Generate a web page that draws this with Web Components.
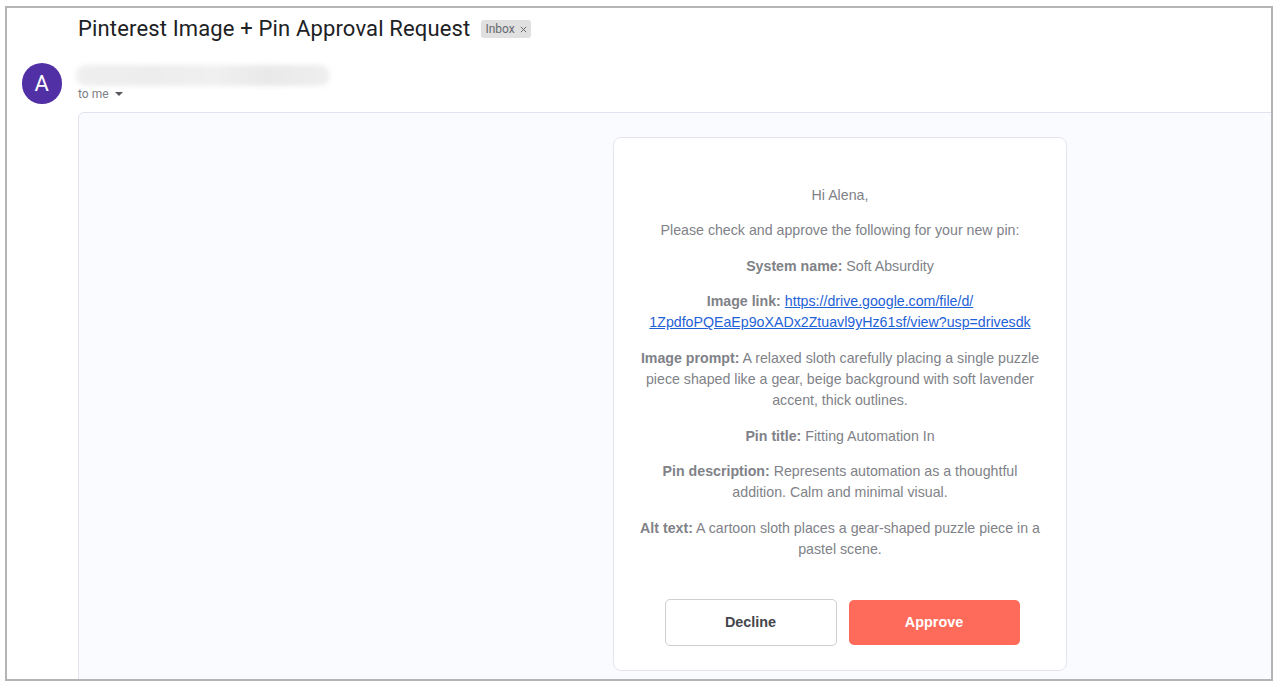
<!DOCTYPE html>
<html>
<head>
<meta charset="utf-8">
<title>Pinterest Image + Pin Approval Request</title>
<style>
  html, body { margin: 0; padding: 0; background: #fff; height: 100%; overflow: hidden; }
  approval-card a { color: #1f62d6; }
</style>
</head>
<body>
<mail-frame>
  <mail-header subject="Pinterest Image + Pin Approval Request" label="Inbox"></mail-header>
  <mail-sender initial="A"></mail-sender>
  <mail-body>
    <approval-card>
      <p>Hi Alena,</p>
      <p>Please check and approve the following for your new pin:</p>
      <p><b>System name:</b> Soft Absurdity</p>
      <p><b>Image link:</b> <a href="#">https://drive.google.com/file/d/<br>1ZpdfoPQEaEp9oXADx2Ztuavl9yHz61sf/view?usp=drivesdk</a></p>
      <p style="margin-bottom: 14.78px"><b>Image prompt:</b> A relaxed sloth carefully placing a single puzzle piece shaped like a gear, beige background with soft lavender accent, thick outlines.</p>
      <p style="margin-bottom: 14.28px"><b>Pin title:</b> Fitting Automation In</p>
      <p><b>Pin description:</b> Represents automation as a thoughtful addition. Calm and minimal visual.</p>
      <p><b>Alt text:</b> A cartoon sloth places a gear-shaped puzzle piece in a pastel scene.</p>
      <action-button slot="actions" kind="decline">Decline</action-button>
      <action-button slot="actions" kind="approve">Approve</action-button>
    </approval-card>
  </mail-body>
</mail-frame>
<script>
class MailFrame extends HTMLElement {
  constructor() {
    super();
    this.attachShadow({ mode: 'open' });
    this.shadowRoot.innerHTML = `
      <style>
        :host {
          display: flex;
          flex-direction: column;
          box-sizing: border-box;
          height: 675px;
          margin: 6px 3px 0 5px;
          border: 2px solid #b4b4b4;
          overflow: hidden;
          background: #fff;
          font-family: Roboto, "Liberation Sans", sans-serif;
        }
      </style>
      <slot></slot>
    `;
  }
}

class MailHeader extends HTMLElement {
  constructor() {
    super();
    this.attachShadow({ mode: 'open' });
    this.shadowRoot.innerHTML = `
      <style>
        :host {
          display: flex;
          align-items: center;
          height: 40px;
          padding-left: 71px;
          flex: none;
        }
        h1 {
          margin: 0;
          font-size: 22px;
          font-weight: 400;
          letter-spacing: 0.15px;
          color: #202124;
          white-space: nowrap;
        }
        .chip {
          display: flex;
          align-items: center;
          gap: 5px;
          margin: 2px 0 0 11px;
          height: 18px;
          padding: 0 4px;
          border-radius: 3px;
          background: #e0e0e0;
          color: #666a6e;
          font-size: 12px;
        }
        svg { width: 7px; height: 7px; }
      </style>
      <h1></h1>
      <span class="chip"><span class="label"></span>
        <svg viewBox="0 0 8 8"><path d="M1 1l6 6M7 1L1 7" stroke="#5f6368" stroke-width="1.1" fill="none"/></svg>
      </span>
    `;
  }
  connectedCallback() {
    this.shadowRoot.querySelector('h1').textContent = this.getAttribute('subject');
    this.shadowRoot.querySelector('.label').textContent = this.getAttribute('label');
  }
}

class MailSender extends HTMLElement {
  constructor() {
    super();
    this.attachShadow({ mode: 'open' });
    this.shadowRoot.innerHTML = `
      <style>
        :host {
          display: flex;
          flex: none;
          height: 64px;
          padding: 15px 0 0 14.5px;
          box-sizing: border-box;
        }
        .avatar {
          width: 40.5px;
          height: 40.5px;
          border-radius: 50%;
          background: #5130a5;
          color: #fff;
          display: flex;
          align-items: center;
          justify-content: center;
          font-size: 22px;
          flex: none;
        }
        .who { margin: 2px 0 0 16px; position: relative; }
        .smudge {
          width: 254px;
          height: 21px;
          margin-left: -2px;
          border-radius: 11px;
          background: linear-gradient(90deg, #efefef, #ededed 30%, #f0f0f0 55%, #e9e9e9 75%, #efefef);
          filter: blur(2.5px);
        }
        .to {
          display: flex;
          align-items: center;
          gap: 6px;
          margin-top: 1px;
          font-size: 12px;
          color: #7d8084;
        }
        .to i {
          width: 0;
          height: 0;
          border: 4px solid transparent;
          border-top-color: #55585c;
          border-bottom-width: 0;
        }
      </style>
      <div class="avatar"></div>
      <div class="who">
        <div class="smudge"></div>
        <div class="to">to me <i></i></div>
      </div>
    `;
  }
  connectedCallback() {
    this.shadowRoot.querySelector('.avatar').textContent = this.getAttribute('initial');
  }
}

class MailBody extends HTMLElement {
  constructor() {
    super();
    this.attachShadow({ mode: 'open' });
    this.shadowRoot.innerHTML = `
      <style>
        :host {
          display: block;
          flex: none;
          margin-left: 71px;
          width: 1400px;
          height: 700px;
          box-sizing: border-box;
          padding: 24px 0 0 534px;
          background: #fafbfe;
          border: 1px solid #e1e4ee;
          border-radius: 6px 0 0 0;
        }
      </style>
      <slot></slot>
    `;
  }
}

class ApprovalCard extends HTMLElement {
  constructor() {
    super();
    this.attachShadow({ mode: 'open' });
    this.shadowRoot.innerHTML = `
      <style>
        :host {
          display: block;
          box-sizing: border-box;
          width: 454px;
          height: 534px;
          padding: 46.9px 22px 0;
          background: #fff;
          border: 1px solid #e2e5ec;
          border-radius: 8px;
          text-align: center;
          font: 14.2px/21px "Liberation Sans", Arial, sans-serif;
          color: #808288;
        }
        ::slotted(p) { margin: 0 0 14.53px; }
        .actions {
          display: flex;
          justify-content: center;
          align-items: center;
          gap: 12px;
          margin-top: 39.34px;
          padding-left: 4px;
        }
      </style>
      <slot></slot>
      <div class="actions"><slot name="actions"></slot></div>
    `;
  }
}

class ActionButton extends HTMLElement {
  constructor() {
    super();
    this.attachShadow({ mode: 'open' });
    this.shadowRoot.innerHTML = `
      <style>
        :host {
          display: flex;
          align-items: center;
          justify-content: center;
          box-sizing: border-box;
          border-radius: 5px;
          font: bold 14.4px "Liberation Sans", Arial, sans-serif;
        }
        :host([kind="decline"]) {
          width: 172px;
          height: 47px;
          background: #fff;
          border: 1px solid #cfcfcf;
          color: #44464b;
        }
        :host([kind="approve"]) {
          width: 171px;
          height: 45px;
          background: #ff6b5b;
          color: #fff;
        }
      </style>
      <slot></slot>
    `;
  }
}

customElements.define('mail-frame', MailFrame);
customElements.define('mail-header', MailHeader);
customElements.define('mail-sender', MailSender);
customElements.define('mail-body', MailBody);
customElements.define('approval-card', ApprovalCard);
customElements.define('action-button', ActionButton);
</script>
</body>
</html>
